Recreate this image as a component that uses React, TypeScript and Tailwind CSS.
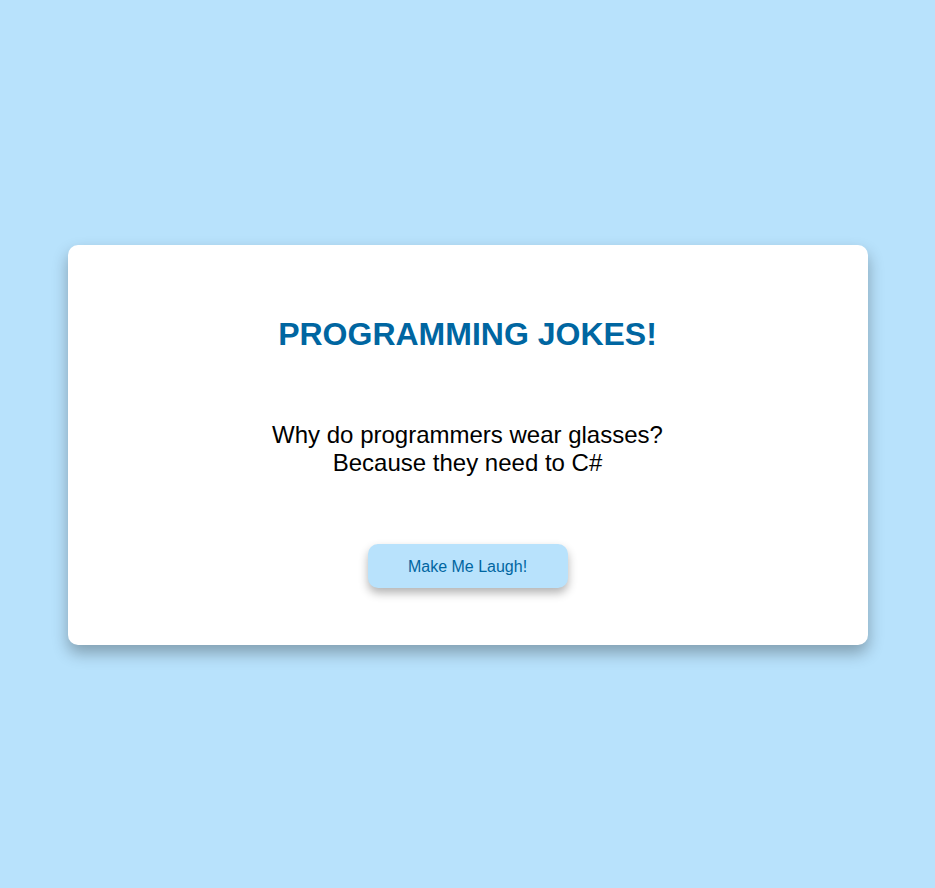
import React from 'react';

const App: React.FC = () => {
  return (
    <div className="min-h-screen w-full bg-[#b8e2fc] flex items-center justify-center pt-[2px] font-['Liberation_Sans',Arial,sans-serif]">
      <div className="w-[800px] h-[400px] bg-white rounded-[10px] shadow-[0_8px_16px_rgba(0,0,0,0.3)] flex flex-col items-center pt-[71px]">
        <h1 className="text-[32px] leading-[36px] font-bold text-[#0066a1]">PROGRAMMING JOKES!</h1>

        <p className="mt-[69px] text-[24px] leading-[27.6px] text-black text-center">
          Why do programmers wear glasses?
          <br />
          Because they need to C#
        </p>

        <button className="mt-[68px] w-[200px] h-[44px] pt-[2px] rounded-[10px] bg-[#b8e2fc] text-[16px] text-[#0066a1] shadow-[0_5px_10px_rgba(0,0,0,0.3)]">
          Make Me Laugh!
        </button>
      </div>
    </div>
  );
};

export default App;
